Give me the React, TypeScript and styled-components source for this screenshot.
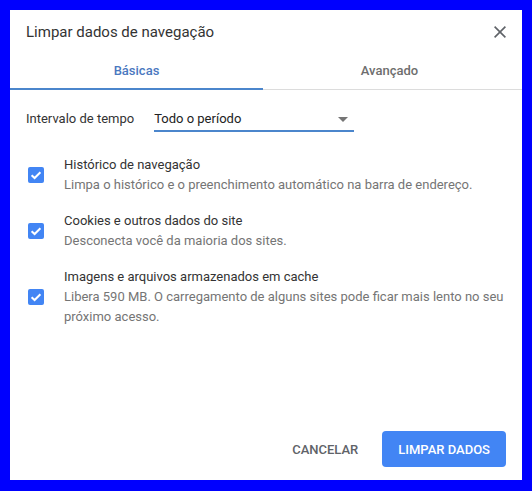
import React from "react";
import styled, { createGlobalStyle } from "styled-components";

const GlobalStyle = createGlobalStyle`
  * { box-sizing: border-box; }
  html, body {
    margin: 0;
    padding: 0;
    background: #0000fe;
    font-family: Roboto, "Liberation Sans", Arial, sans-serif;
  }
`;

interface ClearItem {
    title: string;
    description: string;
}

const items: ClearItem[] = [
    {
        title: "Histórico de navegação",
        description: "Limpa o histórico e o preenchimento automático na barra de endereço.",
    },
    {
        title: "Cookies e outros dados do site",
        description: "Desconecta você da maioria dos sites.",
    },
    {
        title: "Imagens e arquivos armazenados em cache",
        description: "Libera 590 MB. O carregamento de alguns sites pode ficar mais lento no seu próximo acesso.",
    },
];

const CloseIcon = () => (
    <svg width="12" height="12" viewBox="0 0 12 12">
        <path d="M0.6 0.6 L11.4 11.4 M11.4 0.6 L0.6 11.4" stroke="#5f6368" strokeWidth="1.6" fill="none" />
    </svg>
);

const CheckMark = () => (
    <svg width="16" height="16" viewBox="0 0 16 16">
        <path d="M3.6 8.2 L6.6 11 L12.4 5.2" stroke="#fff" strokeWidth="2" fill="none" />
    </svg>
);

export default function App() {
    return (
        <>
            <GlobalStyle />
            <Dialog>
                <Header>
                    <Title>Limpar dados de navegação</Title>
                    <CloseButton aria-label="Fechar">
                        <CloseIcon />
                    </CloseButton>
                </Header>
                <TabRow>
                    <Tab $active>Básicas</Tab>
                    <Tab>Avançado</Tab>
                </TabRow>
                <RangeRow>
                    <RangeLabel>Intervalo de tempo</RangeLabel>
                    <Select>
                        <span>Todo o período</span>
                        <Arrow />
                    </Select>
                </RangeRow>
                <ItemList>
                    {items.map((item) => (
                        <Item key={item.title}>
                            <CheckSlot>
                                <Checkbox>
                                    <CheckMark />
                                </Checkbox>
                            </CheckSlot>
                            <ItemText>
                                <ItemTitle>{item.title}</ItemTitle>
                                <ItemDescription>{item.description}</ItemDescription>
                            </ItemText>
                        </Item>
                    ))}
                </ItemList>
                <Footer>
                    <TextButton>Cancelar</TextButton>
                    <PrimaryButton>Limpar dados</PrimaryButton>
                </Footer>
            </Dialog>
        </>
    );
}

const Dialog = styled.div`
  width: 512px;
  height: 470px;
  margin: 10px;
  background: #fff;
  display: flex;
  flex-direction: column;
`
const Header = styled.div`
  display: flex;
  align-items: center;
  justify-content: space-between;
  padding: 12px 16px 10px 16px;
`
const Title = styled.h1`
  margin: 0;
  font-size: 15px;
  line-height: 20px;
  font-weight: 400;
  color: #333;
`
const CloseButton = styled.div`
  display: flex;
  width: 12px;
  height: 12px;
  cursor: pointer;
`
const TabRow = styled.div`
  display: flex;
  padding-right: 6px;
  border-bottom: 1px solid #dcdcdc;
`
const Tab = styled.div<{$active?: boolean}>`
  flex: 1;
  height: 38px;
  margin-bottom: -1px;
  display: flex;
  align-items: center;
  justify-content: center;
  font-size: 13px;
  font-weight: 500;
  color: ${({$active}) => $active ? "#4a78c0" : "#6e6e6e"};
  border-bottom: 2px solid ${({$active}) => $active ? "#4b86cc" : "transparent"};
`
const RangeRow = styled.div`
  display: flex;
  align-items: flex-start;
  gap: 20px;
  padding: 19px 16px 0 16px;
`
const RangeLabel = styled.span`
  font-size: 13px;
  line-height: 20px;
  color: #333;
`
const Select = styled.div`
  width: 200px;
  display: flex;
  align-items: center;
  justify-content: space-between;
  font-size: 13px;
  line-height: 20px;
  color: #222;
  padding-bottom: 1px;
  padding-right: 6px;
  border-bottom: 2px solid #4b86cc;
`
const Arrow = styled.span`
  width: 0;
  height: 0;
  margin-top: 1px;
  border-left: 5px solid transparent;
  border-right: 5px solid transparent;
  border-top: 5px solid #757575;
`
const ItemList = styled.div`
  display: flex;
  flex-direction: column;
  gap: 16px;
  padding: 23px 16px 0 16px;
`
const Item = styled.div`
  display: flex;
  align-items: center;
  gap: 18px;
`
const CheckSlot = styled.div`
  width: 20px;
  display: flex;
  justify-content: center;
  flex-shrink: 0;
`
const Checkbox = styled.div`
  width: 16px;
  height: 16px;
  border-radius: 2px;
  background: #4285f4;
  display: flex;
`
const ItemText = styled.div`
  display: flex;
  flex-direction: column;
  font-size: 13px;
  line-height: 20px;
`
const ItemTitle = styled.span`
  color: #333;
`
const ItemDescription = styled.span`
  color: #757575;
`
const Footer = styled.div`
  margin-top: auto;
  display: flex;
  justify-content: flex-end;
  align-items: center;
  gap: 8px;
  padding: 0 16px 13px 0;
`
const TextButton = styled.div`
  height: 36px;
  padding: 0 16px;
  display: flex;
  align-items: center;
  font-size: 13px;
  font-weight: 500;
  text-transform: uppercase;
  color: #5f6368;
  cursor: pointer;
`
const PrimaryButton = styled(TextButton)`
  background: #4285f4;
  color: #fff;
  border-radius: 4px;
`
